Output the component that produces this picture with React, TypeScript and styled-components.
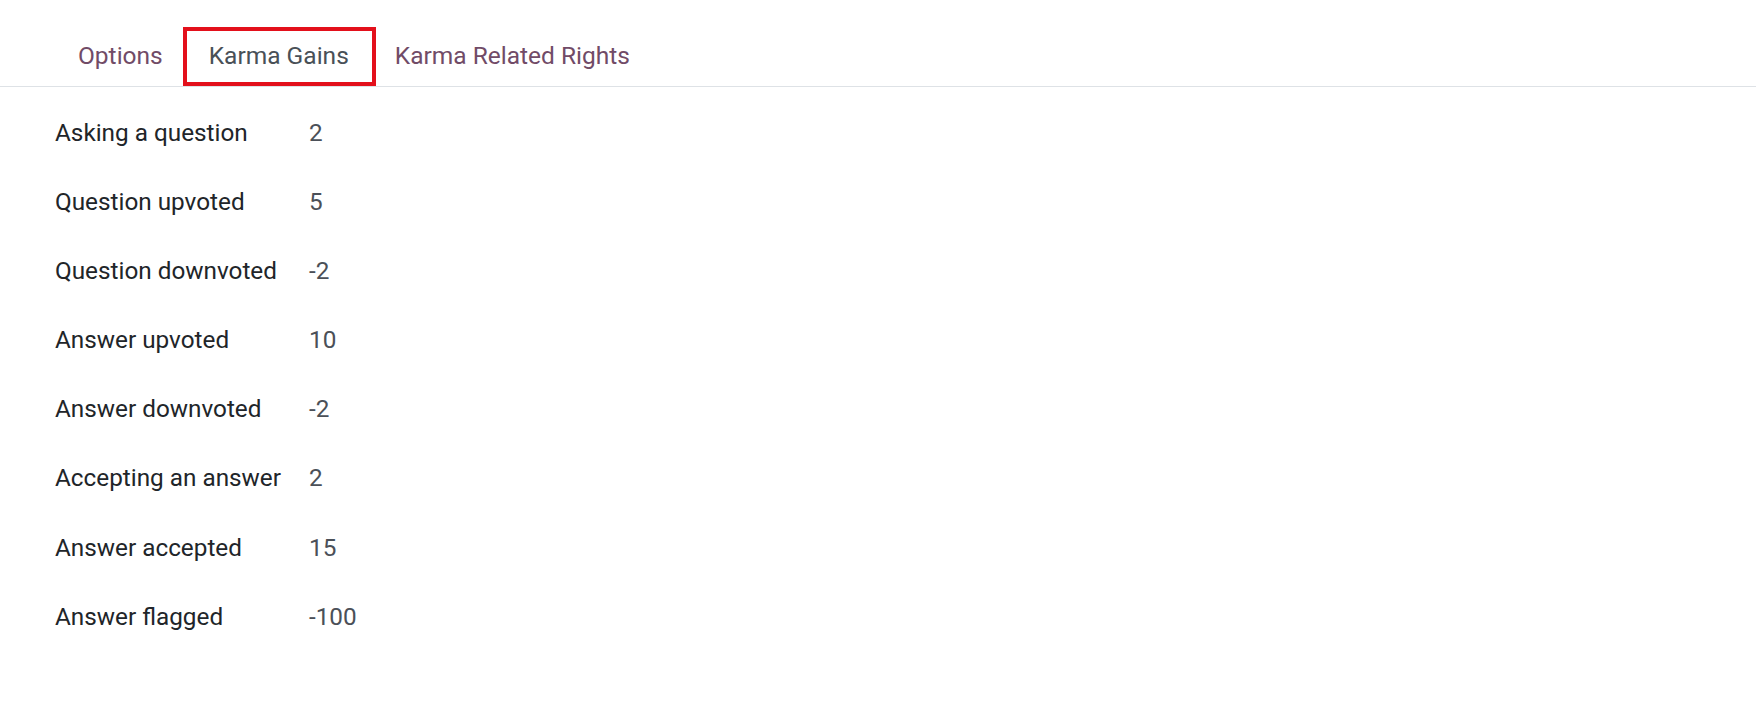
import { Fragment } from "react";
import styled, { createGlobalStyle } from "styled-components";

const GlobalStyle = createGlobalStyle`
  body {
    margin: 0;
    background: #ffffff;
    font-family: Roboto, "Noto Sans", sans-serif;
  }
`;

const Page = styled.div`
  padding-top: 26px;
`;

const TabBar = styled.nav`
  display: flex;
  padding-left: 55px;
  border-bottom: 1px solid #dee2e6;
`;

const Tab = styled.div<{ $active?: boolean }>`
  position: relative;
  padding: 12px 23px;
  font-size: 24.5px;
  line-height: 36px;
  color: ${(p) => (p.$active ? "#495057" : "#714b67")};
  cursor: pointer;

  /* red highlight box drawn around the current tab */
  &::after {
    content: "";
    display: ${(p) => (p.$active ? "block" : "none")};
    position: absolute;
    left: -3px;
    right: -4px;
    top: 1px;
    bottom: 0;
    border: 4px solid #e3101b;
  }
`;

const Table = styled.div`
  display: grid;
  grid-template-columns: 254px auto;
  justify-content: start;
  padding: 11px 0 0 55px;
`;

const Label = styled.div`
  font-size: 24.3px;
  line-height: 69.1px;
  color: #212529;
`;

const Value = styled.div`
  font-size: 24.3px;
  line-height: 69.1px;
  color: #4b5058;
`;

const gains = [
  { label: "Asking a question", value: "2" },
  { label: "Question upvoted", value: "5" },
  { label: "Question downvoted", value: "-2" },
  { label: "Answer upvoted", value: "10" },
  { label: "Answer downvoted", value: "-2" },
  { label: "Accepting an answer", value: "2" },
  { label: "Answer accepted", value: "15" },
  { label: "Answer flagged", value: "-100" },
];

export default function App() {
  return (
    <Page>
      <GlobalStyle />
      <TabBar>
        <Tab>Options</Tab>
        <Tab $active>Karma Gains</Tab>
        <Tab>Karma Related Rights</Tab>
      </TabBar>
      <Table>
        {gains.map((g) => (
          <Fragment key={g.label}>
            <Label>{g.label}</Label>
            <Value>{g.value}</Value>
          </Fragment>
        ))}
      </Table>
    </Page>
  );
}
